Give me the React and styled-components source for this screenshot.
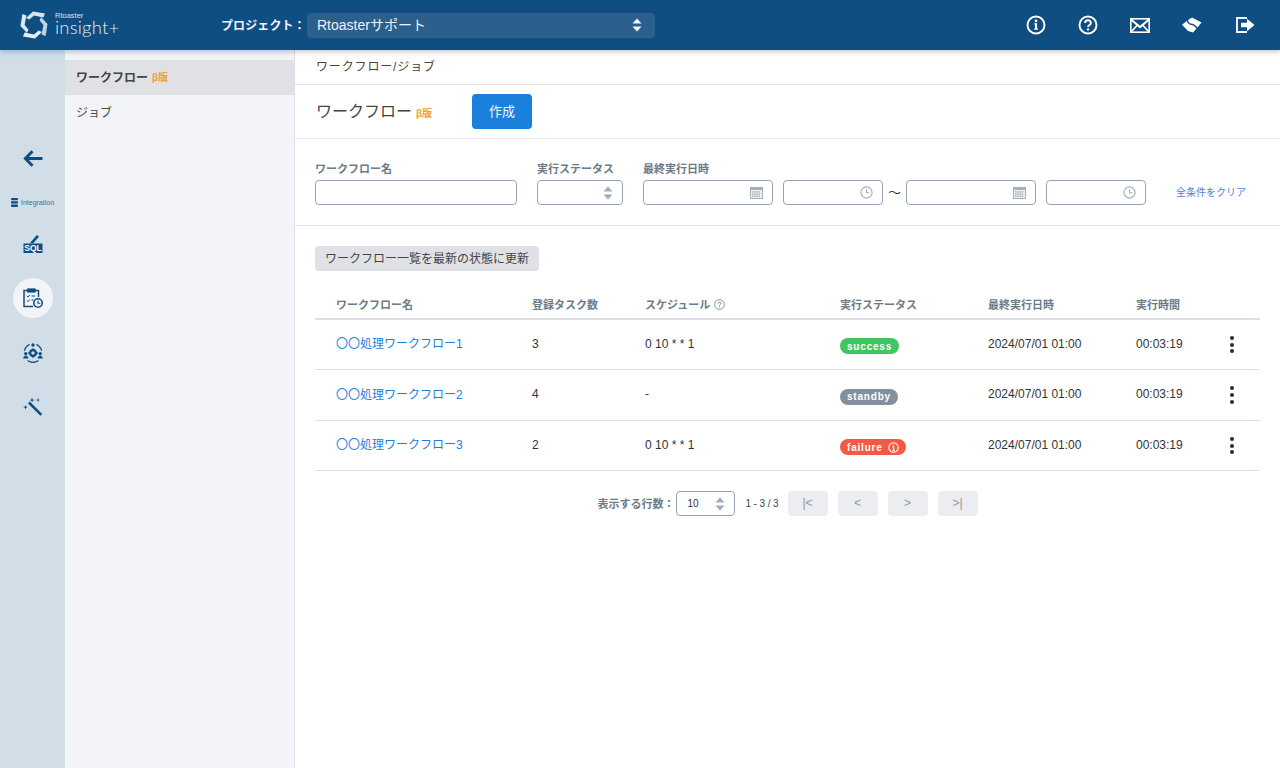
import React from 'react'
import styled, { createGlobalStyle } from 'styled-components'

const GlobalStyle = createGlobalStyle`
    html, body, #root { margin: 0; height: 100%; }
    body {
        font-family: "Liberation Sans", "Noto Sans CJK JP", sans-serif;
        color: #333;
        background: #fff;
        overflow: hidden;
    }
`
const Page = styled.div`
    display: flex;
    flex-direction: column;
    height: 768px;
`
const Header = styled.header`
    position: relative;
    z-index: 2;
    flex: 0 0 50px;
    display: flex;
    align-items: center;
    background: #0f4e82;
    box-shadow: 0 2px 5px rgba(40, 80, 130, 0.3);
`
const Logo = styled.div`
    flex: 0 0 221px;
    display: flex;
    align-items: center;
    gap: 7px;
    padding-left: 20px;
    box-sizing: border-box;
    color: #e6eef5;
`
const LogoText = styled.div`
    display: flex;
    flex-direction: column;
    padding-bottom: 4px;
`
const LogoSmall = styled.span`
    font-size: 7.5px;
    line-height: 8px;
    color: #d7e3ee;
`
const LogoBig = styled.span`
    font-family: Lato, sans-serif;
    font-size: 18.5px;
    line-height: 14px;
    font-weight: 300;
    letter-spacing: 0.2px;
`
const ProjectLabel = styled.span`
    color: #f2f5f8;
    font-size: 12px;
    font-weight: bold;
    letter-spacing: 0.1px;
    width: 86px;
    padding-bottom: 2px;
    white-space: nowrap;
`
const ProjectSelect = styled.div`
    width: 348px;
    height: 25px;
    box-sizing: border-box;
    padding: 0 13px 0 10px;
    display: flex;
    align-items: center;
    justify-content: space-between;
    background: #2a5f8e;
    border-radius: 4px;
    color: #eef3f7;
    font-size: 14px;
`
const ProjectName = styled.span`
    padding-bottom: 2px;
`
const HeaderIcons = styled.div`
    margin-left: auto;
    margin-right: 25px;
    display: flex;
    align-items: center;
    gap: 32px;
`
const HeaderIcon = styled.span`
    display: flex;
    margin-left: ${props => props.shift || 0}px;
`
const Body = styled.div`
    flex: 1;
    display: flex;
    min-height: 0;
`
const Rail = styled.nav`
    flex: 0 0 65px;
    background: #d1dee8;
    display: flex;
    flex-direction: column;
    align-items: center;
    padding-top: 88px;
    box-sizing: border-box;
`
const RailItem = styled.div`
    width: 40px;
    height: 40px;
    margin-bottom: ${props => props.gap}px;
    display: flex;
    align-items: center;
    justify-content: center;
    border-radius: 50%;
    background: ${props => props.active ? '#f2f4f8' : 'transparent'};
`
const IntegrationLabel = styled.div`
    display: flex;
    align-items: center;
    gap: 3px;
    height: 10px;
    margin-bottom: 16px;
    font-size: 7px;
    color: #4c6c88;
`
const SubNav = styled.aside`
    flex: 0 0 229px;
    background: #f2f4f8;
    border-right: 1px solid #dcdfe5;
    padding-top: 10px;
`
const SubNavItem = styled.div`
    height: 35px;
    box-sizing: border-box;
    display: flex;
    align-items: center;
    padding: 0 0 2px 11px;
    gap: 4px;
    font-size: 12px;
    color: #444;
    font-weight: ${props => props.active ? 'bold' : 'normal'};
    background: ${props => props.active ? '#e0e1e4' : 'transparent'};
`
const Beta = styled.span`
    color: #f79a3e;
    font-size: ${props => props.size}px;
    font-weight: bold;
    letter-spacing: 0;
`
const Main = styled.main`
    flex: 1;
    min-width: 0;
    display: flex;
    flex-direction: column;
`
const Breadcrumb = styled.div`
    flex: 0 0 35px;
    box-sizing: border-box;
    padding: 0 21px 4px;
    display: flex;
    align-items: center;
    border-bottom: 1px solid #e3e4e8;
    font-size: 12px;
    letter-spacing: 0.85px;
    color: #444;
`
const TitleRow = styled.div`
    flex: 0 0 54px;
    box-sizing: border-box;
    display: flex;
    align-items: center;
    padding-left: 21px;
    border-bottom: 1px solid #e3e4e8;
`
const Title = styled.h1`
    margin: 0 0 3px;
    width: 156px;
    display: flex;
    align-items: baseline;
    gap: 4px;
    font-size: 16px;
    font-weight: normal;
    color: #444;
`
const CreateButton = styled.button`
    width: 60px;
    height: 35px;
    padding: 0 0 3px;
    border: none;
    border-radius: 4px;
    background: #1b80dc;
    color: #f4f8fc;
    font: inherit;
    font-size: 13px;
`
const Filters = styled.div`
    flex: 0 0 87px;
    box-sizing: border-box;
    display: flex;
    align-items: flex-end;
    padding: 0 20px 20px;
    border-bottom: 1px solid #e3e4e8;
`
const Field = styled.div`
    display: flex;
    flex-direction: column;
    gap: 4px;
    margin-right: ${props => props.gap}px;
`
const Label = styled.label`
    font-size: 11px;
    line-height: 14px;
    font-weight: bold;
    color: #6b7b88;
    white-space: nowrap;
`
const InputBox = styled.div`
    width: ${props => props.w}px;
    height: 25px;
    box-sizing: border-box;
    border: 1px solid #94a3b4;
    border-radius: 4px;
    background: #fff;
    display: flex;
    align-items: center;
    justify-content: flex-end;
    padding: 0 9px 0 10px;
    font-size: 10px;
    color: #333;
`
const BoxValue = styled.span`
    margin-right: auto;
`
const Tilde = styled.span`
    width: 23px;
    margin-left: -10px;
    height: 25px;
    box-sizing: border-box;
    padding-bottom: 3px;
    display: flex;
    align-items: center;
    justify-content: center;
    font-size: 13px;
    color: #333;
`
const ClearLink = styled.a`
    height: 25px;
    box-sizing: border-box;
    padding-bottom: 2px;
    display: flex;
    align-items: center;
    margin-left: 20px;
    font-size: 10px;
    color: #4a86d8;
    white-space: nowrap;
`
const Content = styled.div`
    padding: 20px 20px 0;
`
const RefreshButton = styled.button`
    display: block;
    width: 224px;
    height: 25px;
    padding: 0 0 2px;
    border: none;
    border-radius: 4px;
    background: #e0e1e6;
    color: #444;
    font: inherit;
    font-size: 12px;
`
const Table = styled.div`
    margin-top: 19px;
`
const Row = styled.div`
    display: grid;
    grid-template-columns: 196px 113px 195px 148px 148px 1fr 30px;
    align-items: center;
    padding-left: 21px;
    height: ${props => props.h}px;
    box-sizing: border-box;
    border-bottom: 1px solid #e0e1e6;
    font-size: 12px;
    color: #333;
`
const HeadRow = styled(Row)`
    border-bottom: 2px solid #dfe0e6;
    font-size: 11px;
    font-weight: bold;
    color: #6b7b88;
`
const HeadCell = styled.div`
    display: flex;
    align-items: center;
    gap: 4px;
`
const Cell = styled.div`
    margin-bottom: 2px;
`
const RowLink = styled.a`
    margin-bottom: 4px;
    color: #1b7fdc;
`
const Pill = styled.span`
    justify-self: start;
    display: inline-flex;
    align-items: center;
    gap: 5px;
    height: 16px;
    margin-top: 3px;
    padding: 0 7px;
    border-radius: 8px;
    background: ${props => props.bg};
    color: #fff;
    font-size: 10px;
    font-weight: bold;
    letter-spacing: 0.8px;
`
const MoreDots = styled.div`
    display: flex;
    flex-direction: column;
    gap: 2.6px;
    width: 4px;
`
const Dot = styled.i`
    width: 4px;
    height: 4px;
    border-radius: 50%;
    background: #2b2b33;
`
const Pagination = styled.div`
    margin-top: 20px;
    display: flex;
    align-items: center;
    justify-content: center;
`
const PageLabel = styled.span`
    font-size: 11px;
    font-weight: bold;
    color: #6b7b88;
    margin-right: 2px;
    padding-bottom: 2px;
`
const PageCount = styled.span`
    font-size: 10px;
    letter-spacing: -0.1px;
    color: #444;
    margin: 0 9px 0 10px;
`
const PageButton = styled.button`
    width: 40px;
    height: 25px;
    padding: 0 0 2px;
    margin-right: ${props => props.last ? 0 : 10}px;
    border: none;
    border-radius: 4px;
    background: #ebedf0;
    color: #8b98a6;
    font: inherit;
    font-size: 12px;
`

const Updown = ({ color, w = 10 }) => (
    <svg width={w} height="14" viewBox="0 0 10 14">
        <path d="M5 0.5 L9.5 5.5 H0.5Z M5 13.5 L9.5 8.5 H0.5Z" fill={color} />
    </svg>
)
const CalendarIcon = () => (
    <svg width="13" height="12" viewBox="0 0 13 12">
        <rect width="13" height="12" fill="#a9afb9" />
        <rect x="1" y="3" width="11" height="8" fill="#f0f1f3" />
        {[4.2, 6.4, 8.6].map(y => [2, 4.2, 6.4, 8.6].map(x => (
            <rect key={x + '-' + y} x={x} y={y} width="1.6" height="1.4" fill="#a9afb9" />
        )))}
    </svg>
)
const ClockIcon = () => (
    <svg width="13" height="13" viewBox="0 0 14 14" fill="none" stroke="#a3abb6">
        <circle cx="7" cy="7" r="6" strokeWidth="1.2" />
        <path d="M7 3.5 V7.3 H10" strokeWidth="1.1" />
    </svg>
)
const InfoIcon = () => (
    <svg width="20" height="20" viewBox="0 0 20 20">
        <circle cx="10" cy="10" r="8.5" fill="none" stroke="#fff" strokeWidth="1.9" />
        <circle cx="10" cy="5.9" r="1.3" fill="#fff" />
        <path d="M8.2 8.3 H11.1 V13.4 H12 V14.7 H8.1 V13.4 H9 V9.6 H8.2Z" fill="#fff" />
    </svg>
)
const HelpIcon = () => (
    <svg width="20" height="20" viewBox="0 0 20 20">
        <circle cx="10" cy="10" r="8.5" fill="none" stroke="#fff" strokeWidth="1.9" />
        <path d="M7.1 8 C7.1 4.4 12.9 4.4 12.9 8 C12.9 10 10 10 10 12" fill="none" stroke="#fff" strokeWidth="1.9" />
        <circle cx="10" cy="14.4" r="1.2" fill="#fff" />
    </svg>
)
const MailIcon = () => (
    <svg width="20" height="15" viewBox="0 0 20 15" fill="none" stroke="#fff">
        <rect x="0.8" y="0.8" width="18.4" height="13.4" strokeWidth="1.6" />
        <path d="M1 1.5 L10 9 L19 1.5" strokeWidth="2.2" />
        <path d="M1 14 L7.5 7 M19 14 L12.5 7" strokeWidth="1.8" />
    </svg>
)
const ShareIcon = () => (
    <svg width="20" height="16" viewBox="0 0 20 16" fill="#fff">
        <path d="M6 3 L10 0.5 L19.5 5.5 L15.5 10.5 C13.5 8 11 6.8 8.8 6.6 C7.5 6.5 6.5 5 6 3Z" />
        <path d="M0 7.7 L4.8 4 C5.5 6.2 7 7.8 9 8 C11 8.2 12.8 9.2 14.5 11.5 L11 15.5 L6 14Z" />
    </svg>
)
const LogoutIcon = () => (
    <svg width="19" height="16" viewBox="0 0 19 16">
        <path d="M11 1 H1 V15 H11" fill="none" stroke="#fff" strokeWidth="1.8" />
        <path d="M5 5.8 H11 V1.8 L18.5 8 L11 14.2 V10.2 H5Z" fill="#fff" />
    </svg>
)
const LogoMark = () => (
    <svg width="28" height="28" viewBox="0 0 28 28">
        {[[0, '#d6e4f0'], [90, '#bdd4e7'], [180, '#e4eef6'], [270, '#dbe8f2']].map(([angle, fill]) => (
            <path
                key={angle}
                d="M6 7 L13 0.5 L25 2.4 L23.4 6.4 L14 4.6 L9.4 8.4Z"
                fill={fill}
                transform={`rotate(${angle} 14 14)`}
            />
        ))}
    </svg>
)
const BackIcon = () => (
    <svg width="20" height="17" viewBox="0 0 20 17">
        <path d="M9.5 1.2 L2.4 8.5 L9.5 15.8" fill="none" stroke="#0f4e82" strokeWidth="3" />
        <path d="M3 8.5 H19.5" stroke="#0f4e82" strokeWidth="3" />
    </svg>
)
const DbIcon = () => (
    <svg width="7" height="9" viewBox="0 0 7 9" fill="#0f4e82">
        <rect y="0" width="7" height="2.3" rx="1" />
        <rect y="3.3" width="7" height="2.3" rx="0.6" />
        <rect y="6.6" width="7" height="2.3" rx="1" />
    </svg>
)
const SqlIcon = () => (
    <svg width="20" height="19" viewBox="0 0 20 19">
        <path d="M7 9 L13.8 1 L16 2.8 L10 9.4Z" fill="#0f4e82" />
        <rect x="0.5" y="9.5" width="19" height="9.5" fill="#0f4e82" />
        <text x="10" y="17.4" textAnchor="middle" fontSize="8.5" fontWeight="bold" fill="#fff" fontFamily="Liberation Sans">SQL</text>
    </svg>
)
const TaskIcon = () => (
    <svg width="20" height="20" viewBox="0 0 20 20" fill="none" stroke="#0f4e82">
        <path d="M5 2.5 H1 V18.5 H10 M12 2.5 H15.5 V9" strokeWidth="1.5" />
        <rect x="4.5" y="0.8" width="8" height="3.4" fill="#0f4e82" strokeWidth="0.6" />
        <path d="M3.8 8 L5 9.2 L6.8 7 M3.8 12.5 L5 13.7 L6.8 11.5 M8.5 8 H12 M8.5 12 H10.5" strokeWidth="1" />
        <circle cx="15" cy="15" r="4.2" fill="#f2f4f8" strokeWidth="1.6" />
        <path d="M15 12.6 V15.2 H17.2" strokeWidth="1.1" />
    </svg>
)
const GearPeopleIcon = () => (
    <svg width="20" height="20" viewBox="0 0 20 20" fill="#0f4e82">
        <circle cx="10" cy="2" r="1.7" />
        <circle cx="2.8" cy="10.8" r="1.7" />
        <circle cx="17.2" cy="10.8" r="1.7" />
        <path d="M0.2 15.4 C0.2 12 5.4 12 5.4 15.4Z M14.6 15.4 C14.6 12 19.8 12 19.8 15.4Z" />
        <path d="M1.4 7.8 A9.5 9.5 0 0 1 6.6 1.4 M18.6 7.8 A9.5 9.5 0 0 0 13.4 1.4 M4.6 17.6 A9.5 9.5 0 0 0 15.4 17.6" fill="none" stroke="#0f4e82" strokeWidth="1.2" />
        <circle cx="10" cy="10" r="2.8" fill="none" stroke="#0f4e82" strokeWidth="2.2" />
        <path d="M9 5.4 H11 V7.2 H9Z M9 12.8 H11 V14.6 H9Z M5.4 9 H7.2 V11 H5.4Z M12.8 9 H14.6 V11 H12.8Z" />
    </svg>
)
const WandIcon = () => (
    <svg width="20" height="20" viewBox="0 0 20 20" fill="#0f4e82">
        <path d="M5 6.4 L6.8 4.6 L19.2 17 L17.4 18.8Z" />
        <path d="M9 0.5 L9.7 2.4 L11.5 3 L9.7 3.7 L9 5.5 L8.4 3.7 L6.6 3 L8.4 2.4Z" />
        <path d="M15 1 L15.5 2.5 L17 3 L15.5 3.5 L15 5 L14.5 3.5 L13 3 L14.5 2.5Z" />
        <path d="M2.5 8 L3.1 9.6 L4.8 10.2 L3.1 10.8 L2.5 12.5 L1.9 10.8 L0.2 10.2 L1.9 9.6Z" />
    </svg>
)
const SmallHelp = () => (
    <svg width="11" height="11" viewBox="0 0 11 11" fill="none" stroke="#6b7b88">
        <circle cx="5.5" cy="5.5" r="4.9" strokeWidth="0.8" />
        <path d="M3.9 4.4 C3.9 2.6 7.1 2.6 7.1 4.4 C7.1 5.4 5.5 5.4 5.5 6.6" strokeWidth="0.9" />
        <path d="M5.5 7.4 V8.4" strokeWidth="0.9" />
    </svg>
)
const PillInfo = () => (
    <svg width="11" height="11" viewBox="0 0 11 11" fill="none" stroke="#fff">
        <circle cx="5.5" cy="5.5" r="4.7" strokeWidth="1.1" />
        <path d="M5.5 2.4 V3.8 M4.4 5 H5.7 V8 M4.2 8.2 H6.9" strokeWidth="1.1" />
    </svg>
)

const rows = [
    { name: '〇〇処理ワークフロー1', tasks: 3, schedule: '0 10 * * 1', status: 'success', color: '#41c65f', height: 50 },
    { name: '〇〇処理ワークフロー2', tasks: 4, schedule: '-', status: 'standby', color: '#83919f', height: 51 },
    { name: '〇〇処理ワークフロー3', tasks: 2, schedule: '0 10 * * 1', status: 'failure', color: '#f25a46', height: 50, info: true },
]

const App = () => {
    return (
        <Page>
            <GlobalStyle />
            <Header>
                <Logo>
                    <LogoMark />
                    <LogoText>
                        <LogoSmall>Rtoaster</LogoSmall>
                        <LogoBig>insight+</LogoBig>
                    </LogoText>
                </Logo>
                <ProjectLabel>プロジェクト：</ProjectLabel>
                <ProjectSelect>
                    <ProjectName>Rtoasterサポート</ProjectName>
                    <Updown color="#f2f5f8" />
                </ProjectSelect>
                <HeaderIcons>
                    <HeaderIcon><InfoIcon /></HeaderIcon>
                    <HeaderIcon><HelpIcon /></HeaderIcon>
                    <HeaderIcon><MailIcon /></HeaderIcon>
                    <HeaderIcon><ShareIcon /></HeaderIcon>
                    <HeaderIcon shift={2}><LogoutIcon /></HeaderIcon>
                </HeaderIcons>
            </Header>
            <Body>
                <Rail>
                    <RailItem gap={19}><BackIcon /></RailItem>
                    <IntegrationLabel><DbIcon />Integration</IntegrationLabel>
                    <RailItem gap={15}><SqlIcon /></RailItem>
                    <RailItem gap={15} active><TaskIcon /></RailItem>
                    <RailItem gap={14}><GearPeopleIcon /></RailItem>
                    <RailItem><WandIcon /></RailItem>
                </Rail>
                <SubNav>
                    <SubNavItem active>ワークフロー <Beta size={10}>β版</Beta></SubNavItem>
                    <SubNavItem>ジョブ</SubNavItem>
                </SubNav>
                <Main>
                    <Breadcrumb>ワークフロー/ジョブ</Breadcrumb>
                    <TitleRow>
                        <Title>ワークフロー <Beta size={10}>β版</Beta></Title>
                        <CreateButton>作成</CreateButton>
                    </TitleRow>
                    <Filters>
                        <Field gap={20}>
                            <Label>ワークフロー名</Label>
                            <InputBox w={202} />
                        </Field>
                        <Field gap={20}>
                            <Label>実行ステータス</Label>
                            <InputBox w={86}><Updown color="#a3abb6" /></InputBox>
                        </Field>
                        <Field gap={10}>
                            <Label>最終実行日時</Label>
                            <InputBox w={130}><CalendarIcon /></InputBox>
                        </Field>
                        <Field gap={10}>
                            <InputBox w={100}><ClockIcon /></InputBox>
                        </Field>
                        <Tilde>～</Tilde>
                        <Field gap={10}>
                            <InputBox w={130}><CalendarIcon /></InputBox>
                        </Field>
                        <Field gap={10}>
                            <InputBox w={100}><ClockIcon /></InputBox>
                        </Field>
                        <ClearLink>全条件をクリア</ClearLink>
                    </Filters>
                    <Content>
                        <RefreshButton>ワークフロー一覧を最新の状態に更新</RefreshButton>
                        <Table>
                            <HeadRow h={30}>
                                <HeadCell>ワークフロー名</HeadCell>
                                <HeadCell>登録タスク数</HeadCell>
                                <HeadCell>スケジュール <SmallHelp /></HeadCell>
                                <HeadCell>実行ステータス</HeadCell>
                                <HeadCell>最終実行日時</HeadCell>
                                <HeadCell>実行時間</HeadCell>
                                <HeadCell />
                            </HeadRow>
                            {rows.map((row) => (
                                <Row h={row.height} key={row.name}>
                                    <RowLink>{row.name}</RowLink>
                                    <Cell>{row.tasks}</Cell>
                                    <Cell>{row.schedule}</Cell>
                                    <Pill bg={row.color}>{row.status}{row.info && <PillInfo />}</Pill>
                                    <Cell>2024/07/01 01:00</Cell>
                                    <Cell>00:03:19</Cell>
                                    <MoreDots><Dot /><Dot /><Dot /></MoreDots>
                                </Row>
                            ))}
                        </Table>
                        <Pagination>
                            <PageLabel>表示する行数：</PageLabel>
                            <InputBox w={59}>
                                <BoxValue>10</BoxValue>
                                <Updown color="#a3abb6" />
                            </InputBox>
                            <PageCount>1 - 3 / 3</PageCount>
                            <PageButton>|&lt;</PageButton>
                            <PageButton>&lt;</PageButton>
                            <PageButton>&gt;</PageButton>
                            <PageButton last>&gt;|</PageButton>
                        </Pagination>
                    </Content>
                </Main>
            </Body>
        </Page>
    )
}

export default App
